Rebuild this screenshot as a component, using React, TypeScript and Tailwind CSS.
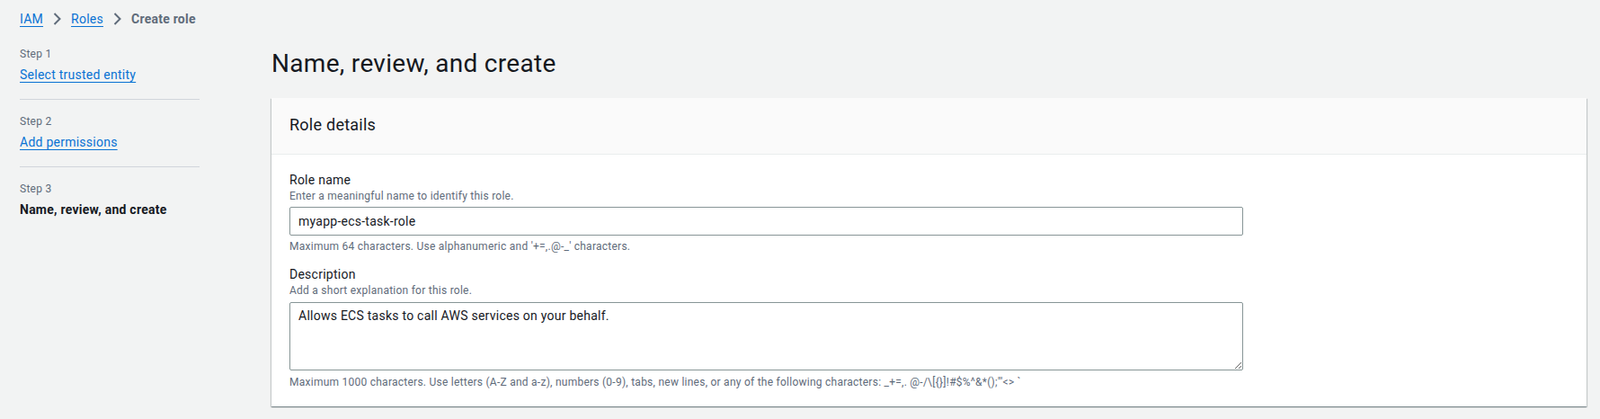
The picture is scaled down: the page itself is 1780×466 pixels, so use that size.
const font = "font-['Roboto','Helvetica_Neue','Liberation_Sans',sans-serif]";

function Chevron() {
  return (
    <svg width="9" height="14" viewBox="0 0 9 14" className="shrink-0 text-[#5f6b7a]">
      <path d="M1.5 1 L7.5 7 L1.5 13" fill="none" stroke="currentColor" strokeWidth="2" />
    </svg>
  );
}

function Breadcrumbs() {
  return (
    <nav className="flex items-center gap-[11px] pl-[22px] pt-[11px] text-[14px] leading-5">
      <a href="#" className="text-[#0972d3] underline underline-offset-[3px]">IAM</a>
      <Chevron />
      <a href="#" className="text-[#0972d3] underline underline-offset-[3px]">Roles</a>
      <Chevron />
      <span className="font-bold text-[#5f6b7a]">Create role</span>
    </nav>
  );
}

function Steps() {
  return (
    <aside className="w-[200px] shrink-0 pt-[21px]">
      <div className="text-[12px] leading-4 text-[#5f6b7a]">Step 1</div>
      <a href="#" className="mt-[5px] block text-[14px] leading-5 text-[#0972d3] underline underline-offset-[3px]">
        Select trusted entity
      </a>
      <div className="mt-[17px] mb-4 h-px bg-[#d1d5db]" />
      <div className="text-[12px] leading-4 text-[#5f6b7a]">Step 2</div>
      <a href="#" className="mt-[5px] block text-[14px] leading-5 text-[#0972d3] underline underline-offset-[3px]">
        Add permissions
      </a>
      <div className="mt-[17px] mb-4 h-px bg-[#d1d5db]" />
      <div className="text-[12px] leading-4 text-[#5f6b7a]">Step 3</div>
      <div className="mt-[5px] text-[14px] font-bold leading-5 text-[#16191f]">Name, review, and create</div>
    </aside>
  );
}

export default function App() {
  return (
    <div className={`min-h-screen bg-[#f2f3f3] text-[#16191f] tracking-[0.25px] ${font}`}>
      <Breadcrumbs />
      <div className="flex gap-[80px] pl-[22px] pr-[15px]">
        <Steps />
        <main className="flex-1">
          <h1 className="mt-[22px] text-[28px] leading-9 font-normal tracking-[0.3px]">Name, review, and create</h1>

          <section className="mt-5 bg-white shadow-[0_1px_1px_0_rgba(0,28,36,0.3),1px_1px_1px_0_rgba(0,28,36,0.15),-1px_1px_1px_0_rgba(0,28,36,0.15)]">
            <div className="border-b border-[#eaeded] bg-[#fafafa] px-5 pt-[18px] pb-[20px]">
              <h2 className="text-[18px] leading-6 font-normal">Role details</h2>
            </div>

            <div className="px-5 pt-[18px] pb-[19px]">
              <label className="block text-[14px] leading-5">Role name</label>
              <p className="text-[12px] leading-4 text-[#5f6b7a]">Enter a meaningful name to identify this role.</p>
              <input
                type="text"
                defaultValue="myapp-ecs-task-role"
                className="mt-1 h-8 w-[1061px] rounded-[2px] border border-[#879596] bg-white px-[9px] text-[14px] tracking-[0.25px] text-[#16191f] outline-none"
              />
              <p className="mt-1 text-[12px] leading-4 text-[#5f6b7a]">
                Maximum 64 characters. Use alphanumeric and '+=,.@-_' characters.
              </p>

              <label className="mt-[13px] block text-[14px] leading-5">Description</label>
              <p className="text-[12px] leading-4 text-[#5f6b7a]">Add a short explanation for this role.</p>
              <textarea
                defaultValue="Allows ECS tasks to call AWS services on your behalf."
                className="mt-[5px] block h-[76px] w-[1061px] rounded-[2px] border border-[#879596] bg-white px-[9px] py-1 text-[14px] leading-5 tracking-[0.25px] text-[#16191f] outline-none"
              />
              <p className="mt-[5px] text-[12px] leading-4 text-[#5f6b7a]">
                Maximum 1000 characters. Use letters (A-Z and a-z), numbers (0-9), tabs, new lines, or any of the following characters: _+=,. @-/\[{"{}"}]!#$%^&amp;*();"'&lt;&gt; `
              </p>
            </div>
          </section>
        </main>
      </div>
    </div>
  );
}
